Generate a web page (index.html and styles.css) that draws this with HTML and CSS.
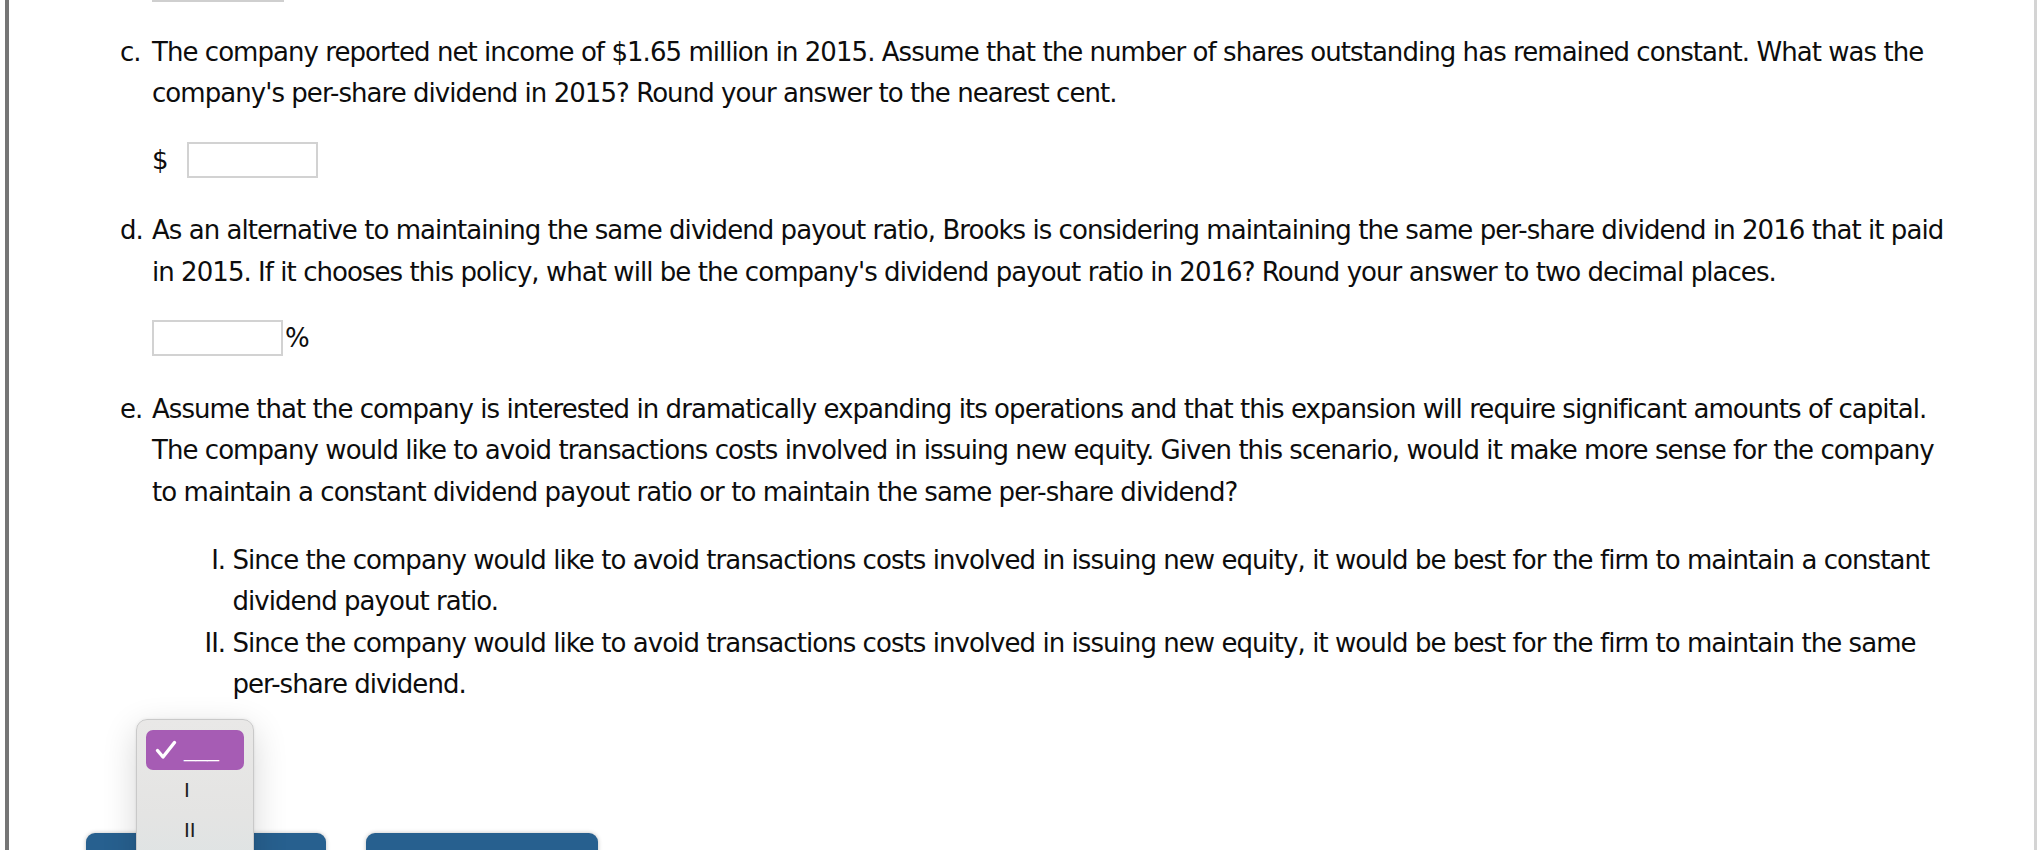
FILE: index.html
```html
<!DOCTYPE html>
<html>
<head>
<meta charset="utf-8">
<link rel="stylesheet" href="styles.css">
</head>
<body>
<div class="frame">
  <div class="stub"></div>

  <div class="part part-c">
    <span class="label">c.</span>
    <div class="body">
      <p>The company reported net income of $1.65 million in 2015. Assume that the number of shares outstanding has remained constant. What was the company's per-share dividend in 2015? Round your answer to the nearest cent.</p>
      <div class="answer"><span class="unit">$</span><span class="input"></span></div>
    </div>
  </div>

  <div class="part">
    <span class="label">d.</span>
    <div class="body">
      <p>As an alternative to maintaining the same dividend payout ratio, Brooks is considering maintaining the same per-share dividend in 2016 that it paid in 2015. If it chooses this policy, what will be the company's dividend payout ratio in 2016? Round your answer to two decimal places.</p>
      <div class="answer answer-tight"><span class="input"></span><span class="unit">%</span></div>
    </div>
  </div>

  <div class="part">
    <span class="label">e.</span>
    <div class="body">
      <p>Assume that the company is interested in dramatically expanding its operations and that this expansion will require significant amounts of capital. The company would like to avoid transactions costs involved in issuing new equity. Given this scenario, would it make more sense for the company to maintain a constant dividend payout ratio or to maintain the same per-share dividend?</p>
      <ol class="choices">
        <li>Since the company would like to avoid transactions costs involved in issuing new equity, it would be best for the firm to maintain a constant dividend payout ratio.</li>
        <li>Since the company would like to avoid transactions costs involved in issuing new equity, it would be best for the firm to maintain the same per-share dividend.</li>
      </ol>
      <div class="select-row">
        <span class="select"></span>
        <div class="popup">
          <div class="opt opt-on">
            <svg class="check" width="22" height="20" viewBox="0 0 22 20"><path d="M2.5 10.5 L8 17 L19.5 2.5" fill="none" stroke="#fff" stroke-width="3.4" stroke-linecap="round" stroke-linejoin="round"/></svg>
            <span class="opt-text">___</span>
          </div>
          <div class="opt"><span class="opt-text">I</span></div>
          <div class="opt"><span class="opt-text">II</span></div>
        </div>
      </div>
    </div>
  </div>

  <div class="buttons">
    <button class="btn btn-wide">Check My Work</button>
    <button class="btn">Reset Problem</button>
  </div>
</div>
</body>
</html>
```

FILE: styles.css
```css
html, body {
  margin: 0;
  padding: 0;
  background: #fff;
  overflow: hidden;
}

.frame {
  position: relative;
  margin-left: 5px;
  width: 2025px;
  height: 850px;
  border-left: 4px solid #767676;
  border-right: 3px solid #d4d4d4;
  overflow: hidden;
  font-family: "DejaVu Sans", Verdana, sans-serif;
  font-size: 26px;
  line-height: 41.6px;
  letter-spacing: -0.95px;
  color: #0d0d0d;
}

.stub {
  margin-left: 143px;
  width: 132px;
  height: 2px;
  background: #cfcfcf;
}

.part {
  display: flex;
  margin-left: 111px;
  width: 1838px;
  margin-bottom: 32.5px;
}

.part-c {
  margin-top: 29.5px;
}

.label {
  flex: 0 0 32px;
}

.body {
  flex: 1;
}

.body p {
  margin: 0;
}

.answer {
  display: flex;
  align-items: center;
  gap: 19px;
  height: 36px;
  margin-top: 27px;
}

.answer-tight {
  gap: 2px;
}

.unit {
  line-height: 36px;
}

.input {
  display: block;
  box-sizing: border-box;
  width: 131px;
  height: 36px;
  border: 2px solid #d2d2d2;
  background: #fff;
}

.choices {
  list-style: upper-roman;
  margin: 26px 0 0 0;
  padding-left: 80.5px;
}

.select-row {
  position: relative;
  margin-top: 23px;
  height: 40px;
}

.select {
  display: block;
  width: 100px;
  height: 40px;
}

.popup {
  position: absolute;
  left: -16px;
  top: -10.5px;
  box-sizing: border-box;
  width: 118px;
  height: 160px;
  padding: 10px 9px;
  border: 1px solid #c9c9c9;
  border-radius: 11px;
  background: linear-gradient(#e9e8e7, #e4e4e3 60%, #dde3e4);
  box-shadow: 0 10px 34px rgba(0, 0, 0, 0.16), 0 0 3px rgba(0, 0, 0, 0.08);
  z-index: 5;
  font-family: "Liberation Sans", Arial, sans-serif;
  font-size: 21px;
  line-height: 40px;
  letter-spacing: 0;
  color: #1d1d1d;
}

.opt {
  position: relative;
  height: 40px;
  padding-left: 38px;
  border-radius: 7px;
}

.opt-on {
  background: #a65cb4;
  color: #fff;
}

.check {
  position: absolute;
  left: 9px;
  top: 10px;
}

.buttons {
  display: flex;
  gap: 40px;
  margin-left: 77px;
  margin-top: 64px;
}

.btn {
  width: 232px;
  height: 60px;
  padding-top: 30px;
  border: none;
  border-radius: 9px;
  background: #27608f;
  color: #fff;
  font-family: "DejaVu Sans", Verdana, sans-serif;
  font-size: 20px;
  box-shadow: 0 0 4px rgba(0, 0, 0, 0.25);
}

.btn-wide {
  width: 240px;
}
```
